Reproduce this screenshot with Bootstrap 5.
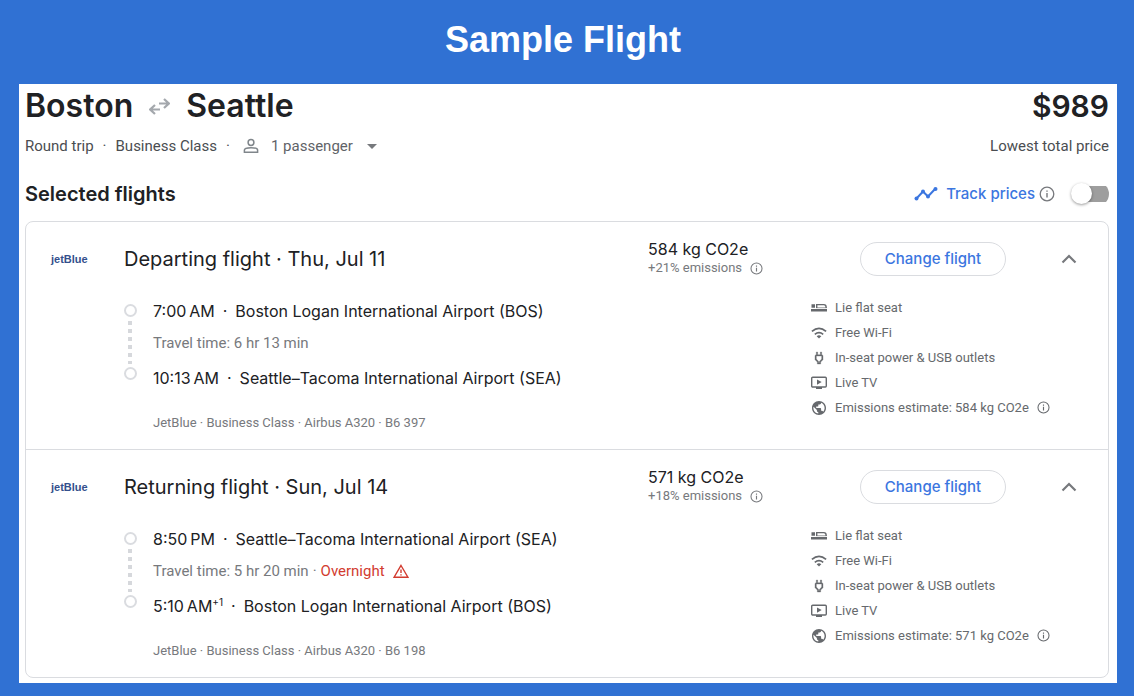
<!DOCTYPE html>
<html lang="en">
<head>
<meta charset="utf-8">
<meta name="viewport" content="width=device-width, initial-scale=1">
<title>Sample Flight</title>
<link href="https://cdn.jsdelivr.net/npm/bootstrap@5.3.0/dist/css/bootstrap.min.css" rel="stylesheet">
<style>
  body { background: #3071d3; color: #202124; font-family: Roboto, sans-serif; font-size: 15px; line-height: 20px; }
  .page-title { font: bold 36px/40px "Liberation Sans", sans-serif; padding: 20px 8px 24px 0; }
  .frame { margin: 0 17px 13px 19px; padding: 0 8px 5px 6px; }
  .display-font { font-family: Inter, sans-serif; }
  .route { font-size: 32px; line-height: 44px; font-weight: 600; }
  .price { font-size: 30px; line-height: 44px; font-weight: 600; }
  .trip-line { color: #4a4d51; margin-top: 8px; }
  .sep { margin: 0 9px; }
  .section-bar { height: 32px; margin-top: 22px; }
  .section-title { font-size: 20px; line-height: 28px; font-weight: 600; }
  .muted { color: #77797d; }
  .link-blue { color: #3b76e0; }
  .track-label { font-weight: 500; }
  .pax-btn { color: #5f6368; font-size: 15px; }
  .pax-btn::after { content: ""; border: 5px solid transparent; border-top-color: #77797d; border-bottom: 0; margin-left: 14px; }
  svg { display: block; flex: none; }

  .switch { appearance: none; width: 38px; height: 24px; margin: 0; position: relative;
    background: linear-gradient(#9e9e9e, #9e9e9e) right center / 32px 16px no-repeat; border-radius: 12px; }
  .switch::before { content: ""; position: absolute; left: 0; top: 1px; width: 21px; height: 21px; border-radius: 50%;
    background: #fff; box-shadow: 0 1px 3px rgba(0,0,0,.4); }
  .switch:checked::before { left: 17px; }

  .flights { border: 1px solid #dadce0; border-radius: 8px; margin-top: 11px; }
  .flight { padding: 18px 31px 16px 25px; }
  .flight + .flight { border-top: 1px solid #dadce0; }
  .airline { width: 73px; color: #34508c; font: bold 11px/36px "Liberation Sans", sans-serif; }
  .flight-title { font-size: 20px; line-height: 36px; font-weight: 400; }
  .co2 { width: 212px; }
  .co2-value { font-size: 16px; line-height: 18px; }
  .fine { font-size: 13px; line-height: 20px; }
  .change-btn { width: 146px; height: 34px; border: 1px solid #dadce0; border-radius: 17px; font-size: 15px; font-weight: 500; }
  .change-btn:hover { border-color: #3b76e0; }
  .toggle-col { width: 71px; }

  .legs { padding-left: 72px; margin-top: 17px; }
  .rail { width: 14px; padding-top: 9px; margin-right: 16px; }
  .stop-dot { width: 13px; height: 13px; border: 2px solid #dadce0; border-radius: 50%; }
  .rail-dots { width: 4px; height: 43px; margin: 4px 0 3px;
    background: repeating-linear-gradient(#d6d8dc 0 4px, transparent 4px 8px); }
  .leg-list { padding-top: 4px; }
  .leg { font-size: 16px; line-height: 24px; gap: 8px; }
  .leg sup { font-size: 10px; top: -6px; }
  .travel { line-height: 20px; margin: 10px 0 13px; }
  .overnight { color: #d23b2f; }
  .aircraft { margin-top: 23px; }
  .features { width: 266px; margin: 0; color: #66696d; }
  .features li { height: 25px; display: flex; align-items: center; gap: 8px; }
</style>
</head>
<body>
<svg width="0" height="0" class="position-absolute" aria-hidden="true">
  <symbol id="i-info" viewBox="0 0 16 16"><circle cx="8" cy="8" r="6.8" fill="none" stroke="currentColor" stroke-width="1.3"/><path d="M7.3 7h1.4v4.6H7.3zM7.3 4.4h1.4v1.4H7.3z" fill="currentColor"/></symbol>
  <symbol id="i-up" viewBox="0 0 16 10"><path d="M1.5 8.500 8 2l6.500 6.500" fill="none" stroke="currentColor" stroke-width="2.200"/></symbol>
  <symbol id="i-seat" viewBox="0 0 16 12"><path d="M.5 2.200h3.500v3.600H.5zM0 7h16v2.600H0z" fill="currentColor"/><path d="M5.700 5.900V2.600h7.100q2.300 0 2.300 2.300v1" fill="none" stroke="currentColor" stroke-width="1.400"/><path d="M5 5.200h10.800v1H5z" fill="currentColor" opacity=".6"/></symbol>
  <symbol id="i-wifi" viewBox="0 0 16 12"><path d="M.9 4.300q7.100-6 14.200 0M3.800 7.300q4.200-3.400 8.400 0" fill="none" stroke="currentColor" stroke-width="1.700"/><path d="M5.700 9.200q2.300-1.800 4.600 0L8 11.600z" fill="currentColor"/></symbol>
  <symbol id="i-plug" viewBox="0 0 24 24"><path d="M16 7V3h-2v4h-4V3H8v4h-.01C6.900 6.990 6 7.890 6 8.980v5.520L9.500 18v3h5v-3l3.500-3.510V9c0-1.100-.9-2-2-2zm0 6.640-3.500 3.510V19h-1v-1.850L8 13.650V9h8v4.640z" fill="currentColor" stroke="currentColor" stroke-width=".5"/></symbol>
  <symbol id="i-tv" viewBox="0 0 16 14"><rect x=".7" y="1.200" width="14.600" height="9.800" rx="1" fill="none" stroke="currentColor" stroke-width="1.400"/><path d="M5 11h6v2H5zM6 3.500 10.700 6.100 6 8.700z" fill="currentColor"/></symbol>
  <symbol id="i-globe" viewBox="2 2 20 20"><path d="M12 2C6.480 2 2 6.480 2 12s4.480 10 10 10 10-4.480 10-10S17.520 2 12 2zm-1 17.930c-3.950-.49-7-3.850-7-7.930 0-.62.080-1.210.210-1.790L9 15v1c0 1.100.9 2 2 2v1.930zm6.900-2.540c-.26-.81-1-1.390-1.900-1.390h-1v-3c0-.55-.45-1-1-1H8v-2h2c.55 0 1-.45 1-1V7h2c1.100 0 2-.9 2-2v-.41c2.930 1.190 5 4.060 5 7.410 0 2.080-.8 3.970-2.100 5.390z" fill="currentColor"/></symbol>
  <symbol id="i-warn" viewBox="0 0 16 14"><path d="M8 1.500 14.900 13.200H1.100z" fill="none" stroke="currentColor" stroke-width="1.400"/><path d="M7.300 5.500h1.400v3.600H7.300zM7.300 10.200h1.400v1.400H7.300z" fill="currentColor"/></symbol>
</svg>

<h1 class="page-title text-white text-center m-0">Sample Flight</h1>

<main class="frame bg-white">
  <header class="d-flex justify-content-between">
    <div>
      <h2 class="route display-font d-flex align-items-center m-0">Boston
        <svg class="mx-3" width="21" height="18" viewBox="0 0 21 18" fill="none" stroke="#a4a8ad" stroke-width="2.200" role="img" aria-label="to and from"><path d="M10 6.500h9.500M15 2l4.800 4.500L15 11M11 12.500H1.500M6 8l-4.800 4.500L6 17"/></svg>
        Seattle</h2>
      <div class="trip-line d-flex align-items-center">
        <span>Round trip</span><span class="sep">·</span><span>Business Class</span><span class="sep">·</span>
        <button type="button" class="pax-btn btn p-0 border-0 d-flex align-items-center lh-1">
          <svg class="ms-1 me-2" width="16" height="16" viewBox="0 0 16 16" fill="none" stroke="#80868b" stroke-width="1.500"><circle cx="8" cy="4.500" r="2.900"/><path d="M1.400 14.300v-2.200C1.400 10.300 5 9.700 8 9.700s6.600.6 6.600 2.400v2.200z"/></svg>
          <span class="ms-1">1 passenger</span></button>
      </div>
    </div>
    <div class="text-end">
      <div class="price display-font">$989</div>
      <div class="trip-line">Lowest total price</div>
    </div>
  </header>

  <div class="section-bar d-flex align-items-center justify-content-between">
    <h3 class="section-title display-font m-0">Selected flights</h3>
    <div class="d-flex align-items-center">
      <svg width="24" height="14" viewBox="0 0 24 14" fill="#3b76e0"><path d="M2.500 11.500 9 4.500l5 5 7.500-8" fill="none" stroke="#3b76e0" stroke-width="2"/><circle cx="2.500" cy="11.500" r="2"/><circle cx="9" cy="4.500" r="2"/><circle cx="14" cy="9.500" r="2"/><circle cx="21.500" cy="2" r="2"/></svg>
      <label for="track" class="track-label link-blue display-font ms-2">Track prices</label>
      <svg class="muted ms-1 me-3" width="16" height="16"><use href="#i-info"/></svg>
      <input type="checkbox" role="switch" id="track" class="switch">
    </div>
  </div>

  <div class="flights">
    <section class="flight">
      <div class="d-flex align-items-center">
        <div class="airline">jetBlue</div>
        <h4 class="flight-title display-font m-0 flex-grow-1">Departing flight · Thu, Jul 11</h4>
        <div class="co2">
          <div class="co2-value display-font">584 kg CO2e</div>
          <div class="fine muted d-flex align-items-center">+21% emissions<svg class="ms-2" width="13" height="13"><use href="#i-info"/></svg></div>
        </div>
        <button type="button" class="change-btn btn p-0 bg-white link-blue display-font">Change flight</button>
        <div class="toggle-col d-flex justify-content-end"><button type="button" class="btn p-0 border-0 muted" aria-label="Collapse departing flight"><svg width="16" height="10"><use href="#i-up"/></svg></button></div>
      </div>
      <div class="legs d-flex">
        <div class="rail d-flex flex-column align-items-center"><span class="stop-dot"></span><span class="rail-dots"></span><span class="stop-dot"></span></div>
        <div class="leg-list flex-grow-1">
          <div class="leg display-font d-flex"><span>7:00&#8239;AM</span><span>·</span><span>Boston Logan International Airport (BOS)</span></div>
          <div class="travel muted">Travel time: 6 hr 13 min</div>
          <div class="leg display-font d-flex"><span>10:13&#8239;AM</span><span>·</span><span>Seattle–Tacoma International Airport (SEA)</span></div>
          <div class="aircraft fine muted">JetBlue · Business Class · Airbus A320 · B6 397</div>
        </div>
        <ul class="features list-unstyled fine">
          <li><svg width="16" height="12"><use href="#i-seat"/></svg>Lie flat seat</li>
          <li><svg width="16" height="12"><use href="#i-wifi"/></svg>Free Wi-Fi</li>
          <li><svg width="16" height="16"><use href="#i-plug"/></svg>In-seat power &amp; USB outlets</li>
          <li><svg width="16" height="14"><use href="#i-tv"/></svg>Live TV</li>
          <li><svg width="16" height="14"><use href="#i-globe"/></svg><span>Emissions estimate: 584 kg CO2e</span><svg width="13" height="13"><use href="#i-info"/></svg></li>
        </ul>
      </div>
    </section>

    <section class="flight">
      <div class="d-flex align-items-center">
        <div class="airline">jetBlue</div>
        <h4 class="flight-title display-font m-0 flex-grow-1">Returning flight · Sun, Jul 14</h4>
        <div class="co2">
          <div class="co2-value display-font">571 kg CO2e</div>
          <div class="fine muted d-flex align-items-center">+18% emissions<svg class="ms-2" width="13" height="13"><use href="#i-info"/></svg></div>
        </div>
        <button type="button" class="change-btn btn p-0 bg-white link-blue display-font">Change flight</button>
        <div class="toggle-col d-flex justify-content-end"><button type="button" class="btn p-0 border-0 muted" aria-label="Collapse returning flight"><svg width="16" height="10"><use href="#i-up"/></svg></button></div>
      </div>
      <div class="legs d-flex">
        <div class="rail d-flex flex-column align-items-center"><span class="stop-dot"></span><span class="rail-dots"></span><span class="stop-dot"></span></div>
        <div class="leg-list flex-grow-1">
          <div class="leg display-font d-flex"><span>8:50&#8239;PM</span><span>·</span><span>Seattle–Tacoma International Airport (SEA)</span></div>
          <div class="travel muted d-flex align-items-center gap-1"><span>Travel time: 5 hr 20 min</span><span>·</span><span class="overnight">Overnight</span><svg class="overnight ms-1" width="16" height="14"><use href="#i-warn"/></svg></div>
          <div class="leg display-font d-flex"><span>5:10&#8239;AM<sup>+1</sup></span><span>·</span><span>Boston Logan International Airport (BOS)</span></div>
          <div class="aircraft fine muted">JetBlue · Business Class · Airbus A320 · B6 198</div>
        </div>
        <ul class="features list-unstyled fine">
          <li><svg width="16" height="12"><use href="#i-seat"/></svg>Lie flat seat</li>
          <li><svg width="16" height="12"><use href="#i-wifi"/></svg>Free Wi-Fi</li>
          <li><svg width="16" height="16"><use href="#i-plug"/></svg>In-seat power &amp; USB outlets</li>
          <li><svg width="16" height="14"><use href="#i-tv"/></svg>Live TV</li>
          <li><svg width="16" height="14"><use href="#i-globe"/></svg><span>Emissions estimate: 571 kg CO2e</span><svg width="13" height="13"><use href="#i-info"/></svg></li>
        </ul>
      </div>
    </section>
  </div>
</main>
<script src="https://cdn.jsdelivr.net/npm/bootstrap@5.3.0/dist/js/bootstrap.bundle.min.js"></script>
</body>
</html>
